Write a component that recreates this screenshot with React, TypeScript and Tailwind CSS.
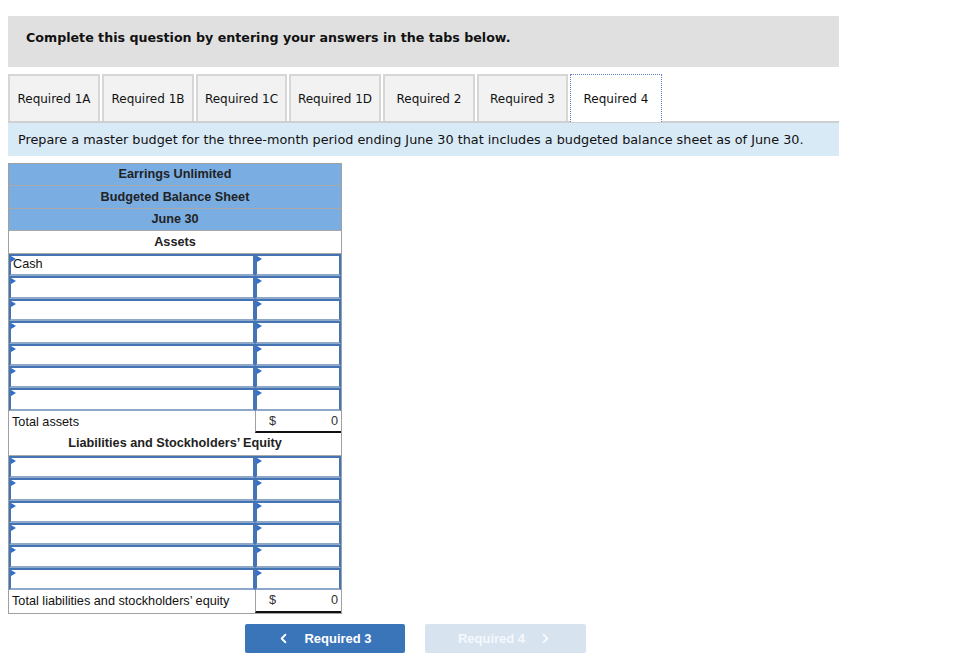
import { ChevronLeft, ChevronRight } from 'lucide-react';

const tabs = [
  { label: 'Required 1A', w: 'w-[92px]' },
  { label: 'Required 1B', w: 'w-[92px]' },
  { label: 'Required 1C', w: 'w-[91px]' },
  { label: 'Required 1D', w: 'w-[92px]' },
  { label: 'Required 2', w: 'w-[92px]' },
  { label: 'Required 3', w: 'w-[91px]' },
  { label: 'Required 4', w: 'w-[92px]', active: true },
];

const verdana = "font-['DejaVu_Sans',Verdana,sans-serif]";
const arial = "font-['Liberation_Sans',Arial,sans-serif]";

function Marker() {
  return (
    <span className="absolute left-0 top-0 w-0 h-0 border-t-[3px] border-b-[3px] border-l-[5px] border-t-transparent border-b-transparent border-l-[#2f6fcb]" />
  );
}

function InputRow({ label }: { label?: string }) {
  return (
    <div className="h-[22.45px] flex">
      <div className="relative w-[246px] h-full border-2 border-[#4474b4] border-b-[#8ea8ca] bg-white flex items-center pl-[2px] text-[12.7px] text-[#111]">
        <Marker />
        {label}
      </div>
      <div className="relative flex-1 h-full border-2 border-[#4474b4] border-b-[#8ea8ca] bg-white">
        <Marker />
      </div>
    </div>
  );
}

function HeaderRow({ text, blue }: { text: string; blue?: boolean }) {
  return (
    <div
      className={
        'h-[22.45px] flex items-center justify-center font-bold text-[12.7px] text-[#222] border-b border-[#a9a9a9] ' +
        (blue ? 'bg-[#7aaee3]' : 'bg-white')
      }
    >
      {text}
    </div>
  );
}

function TotalRow({ label }: { label: string }) {
  return (
    <div className="h-[22.45px] flex">
      <div className="w-[246px] h-full flex items-center pl-[3px] text-[12.7px] text-[#111]">{label}</div>
      <div className="flex-1 h-full border-l border-[#a0a0a0] border-b-2 border-b-[#111] flex items-center justify-between pl-[13px] pr-[3px] text-[12.7px] text-[#333]">
        <span>$</span>
        <span>0</span>
      </div>
    </div>
  );
}

export default function App() {
  return (
    <div className={'w-[962px] h-[670px] bg-white pt-4 px-2 ' + verdana}>
      <div className="w-[831px] h-[51px] bg-[#e0e0e0] pl-[18px] pt-[12px]">
        <p className="font-bold text-[12.65px] leading-[20px] text-[#111]">
          Complete this question by entering your answers in the tabs below.
        </p>
      </div>

      <div className="mt-[7px] flex gap-[2px] h-[47px]">
        {tabs.map((t) =>
          t.active ? (
            <div
              key={t.label}
              className={t.w + ' h-[48px] -mb-[1px] relative z-10 bg-white border border-dotted border-[#5b84c4] border-b-0 flex items-center justify-center text-[12px] text-[#111]'}
            >
              {t.label}
            </div>
          ) : (
            <div
              key={t.label}
              className={t.w + ' h-full bg-[#f2f2f2] border-2 border-b-0 border-[#d6d6d6] flex items-center justify-center text-[12px] text-[#111]'}
            >
              {t.label}
            </div>
          )
        )}
      </div>

      <div className="w-[831px] h-[35px] bg-[#d9eaf7] border-t-2 border-[#cfcfcf] flex items-center pl-[10px] pt-[1px] text-[12.8px] text-[#111]">
        Prepare a master budget for the three-month period ending June 30 that includes a budgeted balance sheet as of June 30.
      </div>

      <div className={'mt-[7px] w-[334px] border-l border-r border-[#a0a0a0] ' + arial}>
        <div className="border-t border-[#a0a0a0]">
          <HeaderRow text="Earrings Unlimited" blue />
          <HeaderRow text="Budgeted Balance Sheet" blue />
          <HeaderRow text="June 30" blue />
          <HeaderRow text="Assets" />
        </div>
        <InputRow label="Cash" />
        <InputRow />
        <InputRow />
        <InputRow />
        <InputRow />
        <InputRow />
        <InputRow />
        <TotalRow label="Total assets" />
        <HeaderRow text="Liabilities and Stockholders’ Equity" />
        <InputRow />
        <InputRow />
        <InputRow />
        <InputRow />
        <InputRow />
        <InputRow />
        <div className="border-b border-[#a0a0a0]">
          <TotalRow label="Total liabilities and stockholders’ equity" />
        </div>
      </div>

      <div className={'mt-[10px] ml-[237px] flex gap-[20px] ' + arial}>
        <button
          type="button"
          className="w-[160px] h-[29px] rounded-[2px] bg-[#3a74b9] text-white font-bold text-[13px] flex items-center justify-center gap-[13px] pr-[2px]"
        >
          <ChevronLeft size={15} strokeWidth={3} />
          <span>Required 3</span>
        </button>
        <button
          type="button"
          className="w-[161px] h-[29px] rounded-[2px] bg-[#d8e3f0] text-[#f5f8fc] font-bold text-[13px] flex items-center justify-center gap-[13px]"
        >
          <span>Required 4</span>
          <ChevronRight size={15} strokeWidth={3} />
        </button>
      </div>
    </div>
  );
}
